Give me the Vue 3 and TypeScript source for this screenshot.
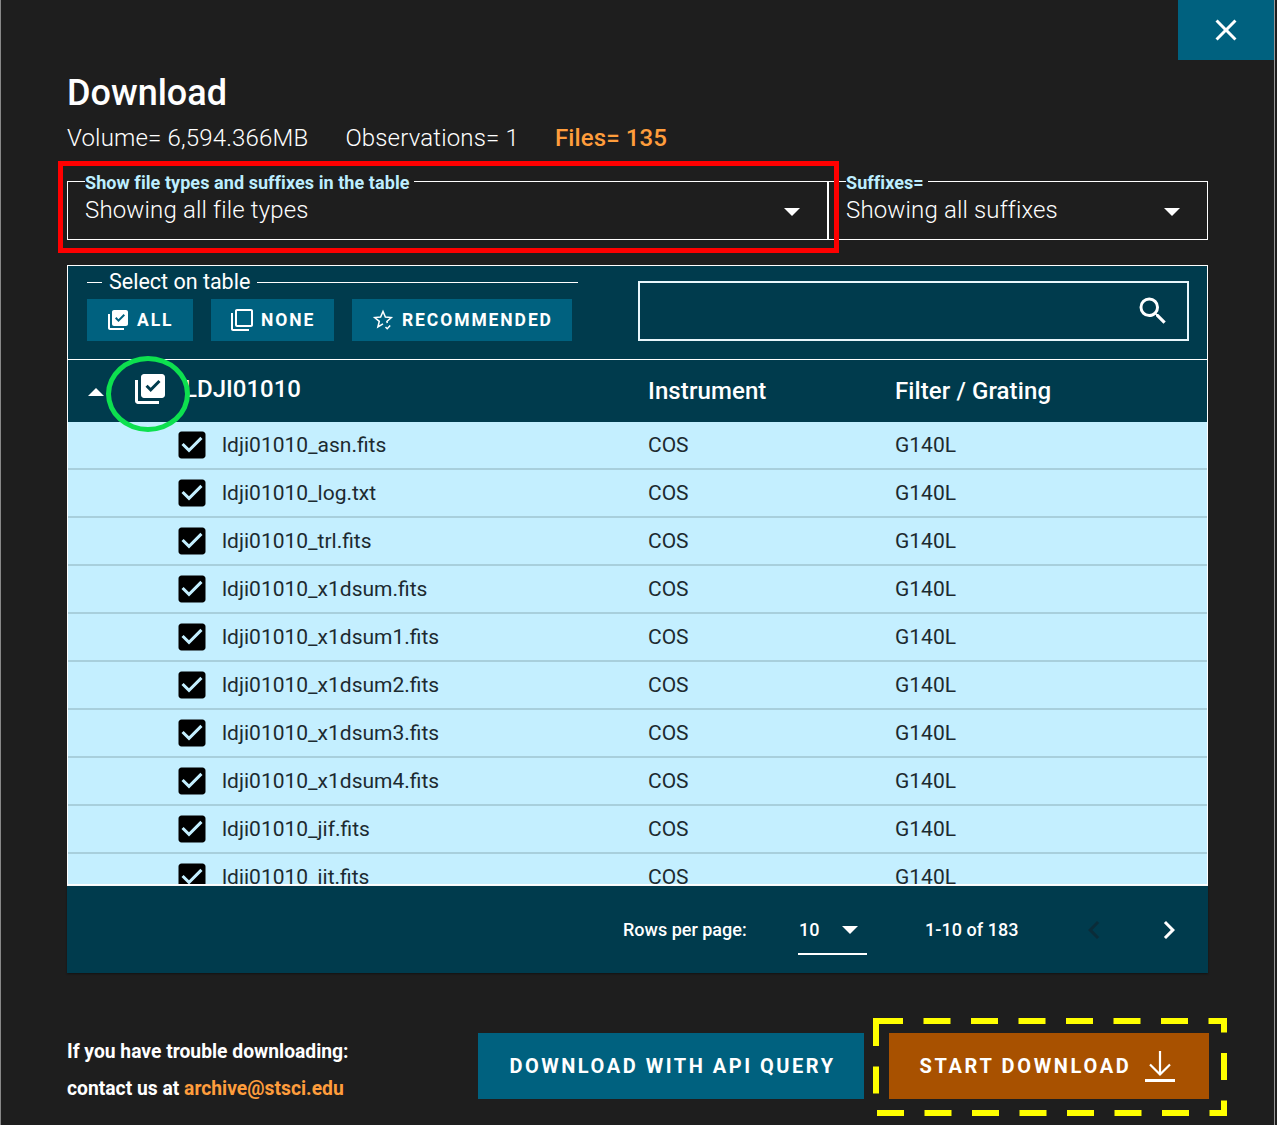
<script setup lang="ts">
const suffixes: string[] = ['asn.fits','log.txt','trl.fits','x1dsum.fits','x1dsum1.fits','x1dsum2.fits','x1dsum3.fits','x1dsum4.fits','jif.fits','jit.fits']
const rows = suffixes.map((s) => ({ name: 'ldji01010_' + s, instrument: 'COS', filter: 'G140L' }))
</script>

<template>
  <div class="page">
    <button class="close" aria-label="Close">
      <svg width="36" height="36" viewBox="0 0 24 24"><path fill="#fff" d="M19 6.41 17.59 5 12 10.59 6.41 5 5 6.41 10.59 12 5 17.59 6.41 19 12 13.41 17.59 19 19 17.59 13.41 12z"/></svg>
    </button>
    <h1 class="title">Download</h1>
    <div class="stats">
      <span>Volume= 6,594.366MB</span>
      <span>Observations= 1</span>
      <span class="files">Files= 135</span>
    </div>
    <div class="selects">
      <fieldset class="select first">
        <legend>Show file types and suffixes in the table</legend>
        <span>Showing all file types</span>
        <i class="caret"></i>
      </fieldset>
      <fieldset class="select second">
        <legend>Suffixes=</legend>
        <span>Showing all suffixes</span>
        <i class="caret"></i>
      </fieldset>
    </div>
    <div class="panel">
      <div class="toolbar">
        <fieldset class="choose">
          <legend>Select on table</legend>
          <div class="choose-btns">
            <button class="tool all">
              <svg width="24" height="24" viewBox="0 0 24 24"><path fill="#fff" d="M20 2H8c-1.1 0-2 .9-2 2v12c0 1.1.9 2 2 2h12c1.1 0 2-.9 2-2V4c0-1.1-.9-2-2-2zm-7.53 12L9 10.5l1.4-1.41 2.07 2.08L17.6 6 19 7.41 12.47 14zM4 6H2v14c0 1.1.9 2 2 2h14v-2H4V6z"/></svg>
              ALL
            </button>
            <button class="tool none">
              <svg width="24" height="24" viewBox="0 0 24 24"><path fill="#fff" d="M3 5H1v16c0 1.1.9 2 2 2h16v-2H3V5zm18-4H7c-1.1 0-2 .9-2 2v14c0 1.1.9 2 2 2h14c1.1 0 2-.9 2-2V3c0-1.1-.9-2-2-2zm0 16H7V3h14v14z"/></svg>
              NONE
            </button>
            <button class="tool rec">
              <svg width="24" height="24" viewBox="0 0 24 24"><path fill="none" stroke="#fff" stroke-width="1.5" d="M12 15.9 6.9 19l1.4-5.7-4.6-3.7 5.9-.6L12 3.5 14.4 9l5.9.6-4.4 3.8.4 1.6"/><path fill="none" stroke="#fff" stroke-width="1.5" d="M14.5 19l1.7 1.7 3-3.2"/></svg>
              RECOMMENDED
            </button>
          </div>
        </fieldset>
        <div class="search">
          <svg width="36" height="36" viewBox="0 0 24 24"><path fill="#fff" d="M15.5 14h-.79l-.28-.27A6.471 6.471 0 0 0 16 9.5 6.5 6.5 0 1 0 9.5 16c1.61 0 3.09-.59 4.23-1.57l.27.28v.79l5 4.99L20.49 19l-4.99-5zm-6 0C7.01 14 5 11.99 5 9.5S7.01 5 9.5 5 14 7.01 14 9.5 11.99 14 9.5 14z"/></svg>
        </div>
      </div>
      <div class="thead">
        <div class="group">
          <i class="up"></i>
          <svg class="group-check" width="36" height="36" viewBox="0 0 24 24"><path fill="#fff" d="M20 2H8c-1.1 0-2 .9-2 2v12c0 1.1.9 2 2 2h12c1.1 0 2-.9 2-2V4c0-1.1-.9-2-2-2zm-7.53 12L9 10.5l1.4-1.41 2.07 2.08L17.6 6 19 7.41 12.47 14zM4 6H2v14c0 1.1.9 2 2 2h14v-2H4V6z"/></svg>
          <span class="gname">LDJI01010</span>
        </div>
        <div class="th col-i">Instrument</div>
        <div class="th">Filter / Grating</div>
      </div>
      <div class="tbody">
        <div v-for="r in rows" :key="r.name" class="row">
          <div class="cell-name">
            <svg width="36" height="36" viewBox="0 0 24 24"><path fill="#000" d="M19 3H5c-1.11 0-2 .9-2 2v14c0 1.1.89 2 2 2h14c1.11 0 2-.9 2-2V5c0-1.1-.89-2-2-2zm-9 14l-5-5 1.41-1.41L10 14.17l7.59-7.59L19 8l-9 9z"/></svg>
            <span>{{ r.name }}</span>
          </div>
          <div class="col-i">{{ r.instrument }}</div>
          <div>{{ r.filter }}</div>
        </div>
      </div>
      <div class="pager">
        <span class="rpp">Rows per page:</span>
        <div class="rpp-select"><span>10</span><i class="caret small"></i></div>
        <span class="range">1-10 of 183</span>
        <svg class="prev" width="36" height="36" viewBox="0 0 24 24"><path fill="#0a2c39" d="M15.41 7.41 14 6l-6 6 6 6 1.41-1.41L10.83 12z"/></svg>
        <svg class="next" width="36" height="36" viewBox="0 0 24 24"><path fill="#fff" d="M10 6 8.59 7.41 13.17 12l-4.58 4.59L10 18l6-6z"/></svg>
      </div>
    </div>
    <div class="bottom">
      <div class="help">
        <p>If you have trouble downloading:</p>
        <p>contact us at <a>archive@stsci.edu</a></p>
      </div>
      <button class="big api">DOWNLOAD WITH API QUERY</button>
      <button class="big start">
        START DOWNLOAD
        <svg width="36" height="36" viewBox="0 0 36 36"><path fill="none" stroke="#fff" stroke-width="2.2" d="M18 3v23M8 16.5 18 26.5 28 16.5"/><path fill="#fff" d="M3 31h30v3H3z"/></svg>
      </button>
    </div>

    <div class="mark-red"></div>
    <div class="mark-green"></div>
    <svg class="mark-yellow" width="354" height="98" viewBox="0 0 354 98"><rect x="3" y="3" width="348" height="92" fill="none" stroke="#ff0" stroke-width="6" stroke-dasharray="27 20.5"/></svg>
  </div>
</template>

<style>
html, body { margin: 0; background: #1e1e1e; }
</style>

<style scoped>
.page {
  position: relative;
  box-sizing: border-box;
  width: 1275px;
  height: 1125px;
  padding: 0 0 0 66px;
  background: #1e1e1e;
  border-left: 1px solid #888;
  border-right: 1px solid #999;
  font-family: Roboto, "Liberation Sans", sans-serif;
  color: #fff;
  overflow: hidden;
}
button { font-family: inherit; border: 0; color: #fff; padding: 0; }
fieldset { margin: 0; }
.close {
  position: absolute; top: 0; right: 0;
  width: 96px; height: 60px;
  background: #00617f;
  display: flex; align-items: center; justify-content: center;
}
.title { margin: 0; padding-top: 71px; font-size: 36px; line-height: 44px; font-weight: 500; }
.stats { display: flex; gap: 37px; margin-top: 7px; font-size: 24px; line-height: 32px; font-weight: 300; letter-spacing: .17px; }
.stats .files { font-weight: 500; color: #ff9d3c; margin-left: -1px; letter-spacing: .1px; }
.selects { display: flex; margin-top: 27px; }
.select {
  position: relative; box-sizing: border-box;
  height: 69px; padding: 0 0 0 17px; border: 1px solid #fff;
  margin-top: -10px;
  font-size: 24px; font-weight: 300; line-height: 32px; letter-spacing: .15px;
}
.select legend { padding: 2px 4px 0 0; margin-left: 0; font-size: 18px; line-height: 19px; font-weight: 700; color: #bdeeff; letter-spacing: .07px; }
.select span { display: block; margin-top: 2px; }
.first { width: 761px; }
.second { width: 380px; }
.caret {
  position: absolute; right: 27px; top: 16px;
  border-left: 8px solid transparent; border-right: 8px solid transparent; border-top: 8px solid #fff;
}
.panel { box-sizing: border-box; width: 1141px; margin-top: 25px; background: #003b4d; border: 1px solid #fff; border-bottom: 0; height: 708px; display: flex; flex-direction: column; }
.toolbar { height: 94px; border-bottom: 1px solid #fff; display: flex; flex: none; box-sizing: border-box; padding: 0 18px 0 19px; justify-content: space-between; }
.choose { border: 0; border-top: 1px solid #fff; padding: 0; width: 491px; box-sizing: border-box; margin-top: 4px; height: 70px; }
.choose legend { font-size: 21.5px; line-height: 24px; padding: 0 7px; margin-left: 15px; font-weight: 400; }
.choose-btns { display: flex; gap: 18px; padding-top: 5px; }
.tool { height: 42px; background: #00617f; display: flex; align-items: center; padding-left: 19px; gap: 7px; font-size: 17.5px; font-weight: 700; letter-spacing: 1.9px; }
.all { width: 106px; }
.none { width: 123px; }
.rec { width: 220px; }
.search { box-sizing: border-box; width: 551px; height: 60px; margin-top: 15px; border: 2px solid #e8f6fb; display: flex; align-items: center; justify-content: flex-end; padding-right: 16px; }
.thead { flex: none; height: 62px; display: grid; grid-template-columns: 580px 247px 1fr; align-items: center; font-size: 24px; font-weight: 500; letter-spacing: .1px; box-sizing: border-box; position: relative; }
.group { display: flex; align-items: center; position: relative; height: 100%; }
.up { position: absolute; left: 20px; top: 28px; border-left: 8px solid transparent; border-right: 8px solid transparent; border-bottom: 8px solid #fff; }
.group-check { position: absolute; left: 64px; top: 11px; }
.gname { margin-left: 116px; margin-top: -4px; letter-spacing: 0; }
.tbody { height: 462px; overflow: hidden; flex: none; background: #c4efff; color: #1c2a30; font-size: 21px; font-weight: 400; border-bottom: 2px solid #fff; }
.row { height: 48px; box-sizing: border-box; display: grid; grid-template-columns: 580px 247px 1fr; align-items: center; border-bottom: 2px solid #a8cfdc; }
.cell-name { display: flex; align-items: center; padding-left: 106px; gap: 12px; }
.cell-name svg { flex: none; }
.pager { flex: 1; display: flex; align-items: center; margin: 0 -1px; font-size: 18px; font-weight: 500; position: relative; background: #003b4d; box-shadow: 0 1px 2px rgba(0,0,0,.4); }
.rpp { margin-left: 556px; width: 175px; }
.rpp-select { width: 69px; height: 50px; box-sizing: border-box; border-bottom: 2px solid #fff; display: flex; align-items: center; position: relative; padding: 2px 0 0 1px; }
.caret.small { right: 9px; top: 21px; }
.range { margin-left: 58px; letter-spacing: .05px; }
.prev { margin-left: 57px; }
.next { margin-left: 39px; }
.bottom { display: flex; align-items: flex-start; margin-top: 60px; }
.help { width: 411px; font-size: 19.3px; font-weight: 700; line-height: 36.5px; padding-top: 1px; flex: none; }
.help p { margin: 0; }
.help a { color: #ff9d3c; }
.big { height: 66px; background: #00617f; font-size: 20px; font-weight: 700; letter-spacing: 2.52px; flex: none; }
.api { width: 386px; padding-left: 3px; }
.start { width: 320px; margin-left: 25px; background: #a85100; display: flex; align-items: center; justify-content: center; gap: 11px; letter-spacing: 2.65px; }
.mark-red { position: absolute; left: 57px; top: 161px; width: 771px; height: 82px; border: 5px solid #f00; }
.mark-green { position: absolute; left: 105px; top: 356px; width: 74px; height: 66px; border: 5px solid #0de04f; border-radius: 50%; }
.mark-yellow { position: absolute; left: 872px; top: 1018px; }
</style>
